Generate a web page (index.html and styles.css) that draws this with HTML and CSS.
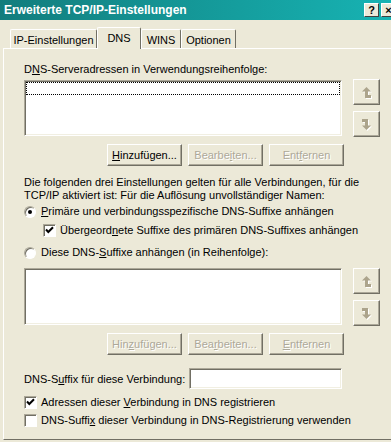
FILE: index.html
```html
<!DOCTYPE html>
<html lang="de">
<head>
  <meta charset="UTF-8" />
  <title>Erweiterte TCP/IP-Einstellungen</title>
  <link rel="stylesheet" href="styles.css">
</head>
<body>
  <div class="window">
    <div class="titlebar">
      <span class="title">Erweiterte TCP/IP-Einstellungen</span>
      <span class="caption-btns">
        <span class="cbtn">?</span>
        <span class="cbtn">&times;</span>
      </span>
    </div>

    <div class="tabstrip">
      <div class="tab tab-ip">IP-Einstellungen</div>
      <div class="tab tab-dns active">DNS</div>
      <div class="tab tab-wins">WINS</div>
      <div class="tab tab-opt">Optionen</div>
    </div>

    <div class="panel">
      <div class="label">D<u>N</u>S-Serveradressen in Verwendungsreihenfolge:</div>
      <div class="listrow">
        <div class="listbox"><div class="focus"></div></div>
        <div class="arrows">
          <span class="arrow">
            <svg width="11" height="13" viewBox="0 0 11 13">
              <path d="M5.5 1 L10 5.5 H7 V9 H10 V12 H4 V5.5 H1 Z" fill="#fff" transform="translate(1 1)"/>
              <path d="M5.5 1 L10 5.5 H7 V9 H10 V12 H4 V5.5 H1 Z" fill="#aca48c"/>
            </svg>
          </span>
          <span class="arrow">
            <svg width="11" height="13" viewBox="0 0 11 13">
              <path d="M5.5 12 L1 7.5 H4 V4 H1 V1 H7 V7.5 H10 Z" fill="#fff" transform="translate(1 1)"/>
              <path d="M5.5 12 L1 7.5 H4 V4 H1 V1 H7 V7.5 H10 Z" fill="#aca48c"/>
            </svg>
          </span>
        </div>
      </div>
      <div class="btnrow">
        <span class="btn"><u>H</u>inzufügen...</span>
        <span class="btn disabled">Bearbe<u>i</u>ten...</span>
        <span class="btn disabled">Ent<u>f</u>ernen</span>
      </div>

      <p class="note">Die folgenden drei Einstellungen gelten für alle Verbindungen, für die<br>TCP/IP aktiviert ist: Für die Auflösung unvollständiger Namen:</p>

      <div class="opt opt-r1">
        <span class="radio checked"></span>
        <span><u>P</u>rimäre und verbindungsspezifische DNS-Suffixe anhängen</span>
      </div>
      <div class="opt opt-sub">
        <span class="check">
          <svg width="11" height="11" viewBox="0 0 11 11"><path d="M2 4.5 L4.3 7 L9 2.2" fill="none" stroke="#000" stroke-width="2"/></svg>
        </span>
        <span>Übergeord<u>n</u>ete Suffixe des primären DNS-Suffixes anhängen</span>
      </div>
      <div class="opt opt-r2">
        <span class="radio"></span>
        <span>Diese DNS-<u>S</u>uffixe anhängen (in Reihenfolge):</span>
      </div>

      <div class="listrow second">
        <div class="listbox"></div>
        <div class="arrows">
          <span class="arrow">
            <svg width="11" height="13" viewBox="0 0 11 13">
              <path d="M5.5 1 L10 5.5 H7 V9 H10 V12 H4 V5.5 H1 Z" fill="#fff" transform="translate(1 1)"/>
              <path d="M5.5 1 L10 5.5 H7 V9 H10 V12 H4 V5.5 H1 Z" fill="#aca48c"/>
            </svg>
          </span>
          <span class="arrow">
            <svg width="11" height="13" viewBox="0 0 11 13">
              <path d="M5.5 12 L1 7.5 H4 V4 H1 V1 H7 V7.5 H10 Z" fill="#fff" transform="translate(1 1)"/>
              <path d="M5.5 12 L1 7.5 H4 V4 H1 V1 H7 V7.5 H10 Z" fill="#aca48c"/>
            </svg>
          </span>
        </div>
      </div>
      <div class="btnrow">
        <span class="btn disabled">Hin<u>z</u>ufügen...</span>
        <span class="btn disabled">Bea<u>r</u>beiten...</span>
        <span class="btn disabled"><u>E</u>ntfernen</span>
      </div>

      <div class="suffix">
        <span>DNS-S<u>u</u>ffix für diese Verbindung:</span>
        <span class="textbox"></span>
      </div>

      <div class="opt opt-c1">
        <span class="check">
          <svg width="11" height="11" viewBox="0 0 11 11"><path d="M2 4.5 L4.3 7 L9 2.2" fill="none" stroke="#000" stroke-width="2"/></svg>
        </span>
        <span>Adressen dieser <u>V</u>erbindung in DNS registrieren</span>
      </div>
      <div class="opt opt-c2">
        <span class="check"></span>
        <span>DNS-Suffi<u>x</u> dieser Verbindung in DNS-Registrierung verwenden</span>
      </div>
    </div>
  </div>
</body>
</html>
```

FILE: styles.css
```css
body {
  margin: 0;
  width: 391px;
  height: 442px;
  overflow: hidden;
  background: #ece9d8;
  font: 11px "Liberation Sans", Arial, sans-serif;
  color: #000;
}
.window {
  width: 400px;
}

/* caption */
.titlebar {
  height: 20px;
  display: flex;
  align-items: center;
  padding-left: 4px;
  background: linear-gradient(to right, #127d7d, #17b4b4);
  color: #fff;
}
.title {
  font-weight: bold;
  font-size: 12px;
}
.caption-btns {
  margin-left: auto;
  margin-right: 4px;
  display: flex;
  gap: 2px;
}
.cbtn {
  width: 15px;
  height: 14px;
  box-sizing: border-box;
  background: #ece9d8;
  border: 1px solid;
  border-color: #fff #404040 #404040 #fff;
  color: #000;
  font-weight: bold;
  font-size: 11px;
  line-height: 12px;
  text-align: center;
}

/* tabs */
.tabstrip {
  height: 28px;
  box-sizing: border-box;
  display: flex;
  align-items: flex-end;
  padding-left: 10px;
}
.tab {
  height: 19px;
  box-sizing: border-box;
  border: 1px solid;
  border-bottom: none;
  border-color: #fff #716f64 #fff #fff;
  border-radius: 2px 2px 0 0;
  padding-top: 4px;
  line-height: 13px;
  text-align: center;
}
.tab.active {
  height: 22px;
  margin-bottom: -1px;
  position: relative;
  z-index: 1;
  background: #ece9d8;
}
.tab-ip { width: 87px; }
.tab-dns { width: 44px; }
.tab-wins { width: 40px; }
.tab-opt { width: 55px; }

.panel {
  margin-left: 3px;
  height: 392px;
  box-sizing: border-box;
  border-top: 1px solid #fff;
  border-left: 1px solid #fff;
  border-bottom: 1px solid #716f64;
  padding: 14px 0 0 20px;
}
.label {
  line-height: 13px;
}

/* lists */
.listrow {
  margin-top: 2px;
  display: flex;
  gap: 11px;
}
.listbox {
  width: 318px;
  height: 56px;
  margin-top: 2px;
  box-sizing: border-box;
  background: #fff;
  border: 1px solid;
  border-color: #aca899 #fff #fff #aca899;
  box-shadow: inset 1px 1px #716f64, inset -1px -1px #f1efe2;
  padding: 1px;
}
.focus {
  height: 13px;
  border: 1px dotted #000;
  box-sizing: border-box;
}
.arrows {
  margin-top: 1px;
  display: flex;
  flex-direction: column;
  gap: 6px;
}
.arrow {
  width: 27px;
  height: 26px;
  box-sizing: border-box;
  display: flex;
  align-items: center;
  justify-content: center;
  border: 1px solid;
  border-color: #fff #716f64 #716f64 #fff;
  box-shadow: inset -1px -1px #aca899;
}
.listrow.second {
  margin-top: 9px;
}
.listrow.second .listbox {
  margin-top: 0;
  height: 57px;
}
.listrow.second .arrows {
  margin-top: 0;
}

/* push buttons */
.btnrow {
  width: 320px;
  margin-top: 7px;
  display: flex;
  justify-content: flex-end;
  gap: 6px;
}
.btn {
  width: 75px;
  height: 22px;
  box-sizing: border-box;
  border: 1px solid;
  border-color: #fff #716f64 #716f64 #fff;
  box-shadow: inset -1px -1px #aca899;
  display: flex;
  align-items: center;
  justify-content: center;
}
.btn.disabled {
  color: #aca899;
  text-shadow: 1px 1px #fff;
}

.note {
  margin: 10px 0 0;
  line-height: 13px;
}

/* radios and checkboxes */
.opt {
  height: 13px;
  line-height: 13px;
  display: flex;
  align-items: center;
  gap: 4px;
}
.opt-r1 { margin-top: 3px; }
.opt-sub { margin-top: 6px; padding-left: 19px; }
.opt-r2 { margin-top: 9px; }
.opt-c1 { margin-top: 7px; }
.opt-c2 { margin-top: 5px; }
.radio {
  width: 12px;
  height: 12px;
  margin-right: 1px;
  box-sizing: border-box;
  border-radius: 50%;
  border: 1px solid;
  border-color: #aca899 #fff #fff #aca899;
  box-shadow: inset 1px 1px #716f64;
  background: #fff;
  display: flex;
  align-items: center;
  justify-content: center;
}
.radio.checked::after {
  content: "";
  width: 4px;
  height: 4px;
  border-radius: 50%;
  background: #000;
}
.check {
  width: 13px;
  height: 13px;
  box-sizing: border-box;
  border: 1px solid;
  border-color: #aca899 #fff #fff #aca899;
  box-shadow: inset 1px 1px #716f64;
  background: #fff;
  display: flex;
  align-items: center;
  justify-content: center;
}

.suffix {
  width: 318px;
  margin-top: 13px;
  display: flex;
  align-items: center;
  justify-content: space-between;
}
.textbox {
  width: 153px;
  height: 21px;
  box-sizing: border-box;
  background: #fff;
  border: 1px solid;
  border-color: #aca899 #fff #fff #aca899;
  box-shadow: inset 1px 1px #716f64, inset -1px -1px #f1efe2;
}
```
